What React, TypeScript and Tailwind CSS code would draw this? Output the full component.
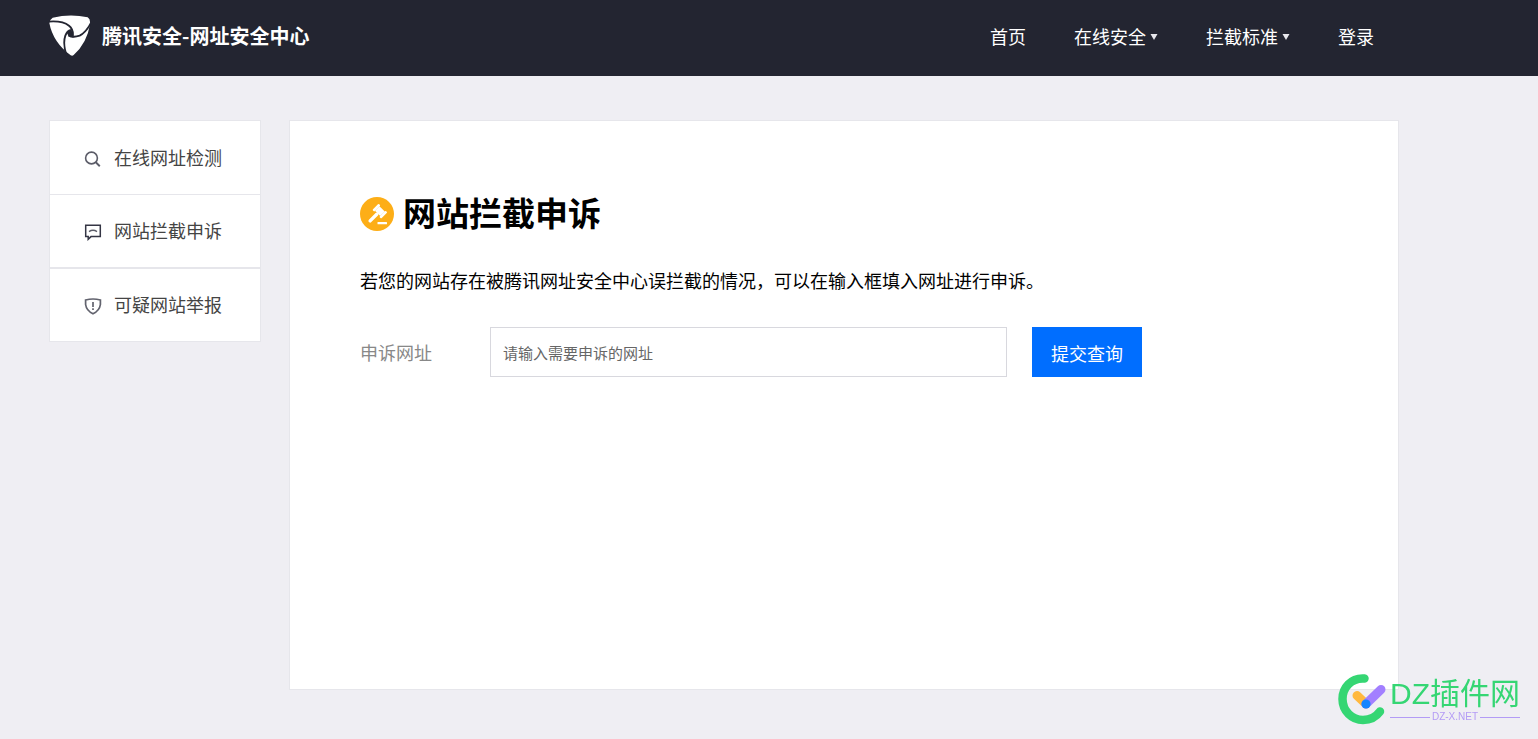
import React from 'react';

const NAV_ITEMS = [
  { label: '首页', menu: false },
  { label: '在线安全', menu: true },
  { label: '拦截标准', menu: true },
  { label: '登录', menu: false },
];

const SearchIcon = () => (
  <svg className="mt-0.5" width="18" height="18" viewBox="0 0 18 18" fill="none" stroke="#5b5c68" strokeWidth="1.6">
    <circle cx="7.5" cy="8" r="5.9" />
    <path d="M11.8 12.3 L15.8 16.2" strokeWidth="1.9" />
  </svg>
);

const MessageIcon = () => (
  <svg className="mt-0.5" width="18" height="18" viewBox="0 0 18 18" fill="none" stroke="#343544" strokeWidth="1.5">
    <path d="M1.7 2.2 H16.3 V13.6 H7 L4.2 16.3 V13.6 H1.7 Z" />
    <path d="M5 8.6 Q9 6 13 8.6" stroke="#5b5c68" />
  </svg>
);

const ShieldIcon = () => (
  <svg className="mt-0.5" width="18" height="18" viewBox="0 0 18 18" fill="none" stroke="#62636e" strokeWidth="1.7">
    <path d="M1.6 3 Q9 1 16.4 3 V7.5 Q15.6 13.6 9 16.8 Q2.4 13.6 1.6 7.5 Z" />
    <path d="M9 5 V10 M9 11.3 V13" />
  </svg>
);

const SIDE_ITEMS = [
  { label: '在线网址检测', icon: SearchIcon },
  { label: '网站拦截申诉', icon: MessageIcon },
  { label: '可疑网站举报', icon: ShieldIcon },
];

const Logo = () => (
  <svg className="shrink-0" width="42" height="42" viewBox="26 30 126 126" fill="none">
    <path d="M27 54 Q28 44 37 38 Q90 26 142 37 Q151 42 149 58 Q140 115 100 150 Q96 154 91 151 Q38 112 27 54 Z" fill="#fff" />
    <g stroke="#232531" strokeWidth="5.5">
      <path d="M22 50 Q66 46 86 62 Q101 74 97 97" />
      <path d="M154 50 Q138 82 118 92 Q98 99 84 91" />
      <path d="M81 158 Q66 118 75 92 Q80 78 92 75" />
    </g>
    <path d="M79 82 L94 74 L98 97 L84 92 Z" fill="#232531" />
  </svg>
);

const GavelIcon = () => (
  <svg className="shrink-0" width="34" height="34" viewBox="0 0 34 34">
    <circle cx="17" cy="17" r="17" fill="#fdae17" />
    <g fill="#fff">
      <g transform="rotate(45 20 14)">
        <rect x="16.2" y="11" width="7.6" height="6.4" />
        <rect x="13.8" y="9.800" width="2.6" height="8.8" rx="0.9" />
        <rect x="23.6" y="9.8" width="2.6" height="8.8" rx="0.9" />
        <rect x="18.3" y="17" width="3.4" height="12.6" rx="1.6" />
      </g>
      <rect x="17.5" y="25" width="9.5" height="2.2" rx="0.5" />
    </g>
  </svg>
);

const Watermark = () => (
  <div className="pointer-events-none fixed bottom-[14px] right-[18px] flex items-center gap-[3px] font-['Liberation_Sans','Noto_Sans_CJK_SC',sans-serif]">
    <svg width="49" height="52" viewBox="0 0 49 52" fill="none" strokeLinecap="round">
      <path d="M26.5 5.5 C13 4.5 4.5 15 4.5 26 C4.5 38 14 47 25 47 C32 47 38 44 42 38.5" stroke="#35d673" strokeWidth="8.5" />
      <path d="M19 22.5 L28 31" stroke="#ffb83f" strokeWidth="9" />
      <path d="M28 31 L43 16.5" stroke="#a27fff" strokeWidth="9" />
      <circle cx="28" cy="31" r="4.6" fill="#1485ff" />
    </svg>
    <div>
      <div className="text-[30px] leading-9 text-[#35d673]">DZ插件网</div>
      <div className="flex items-center gap-[2px] text-[10px] leading-[10px] text-[#b39bf5]">
        <span className="h-px flex-1 bg-[#b39bf5]" />
        DZ-X.NET
        <span className="h-px flex-1 bg-[#b39bf5]" />
      </div>
    </div>
  </div>
);

const App: React.FC = () => {
  return (
    <div className="flex min-h-screen flex-col bg-[#efeef3] font-['Noto_Sans_CJK_SC',sans-serif] text-[18px] text-black">
      <header className="flex h-[76px] items-center justify-between bg-[#232531] pb-1 pl-[49px] pr-[164px] text-white">
        <a href="#" className="flex items-center gap-[11px]">
          <Logo />
          <span className="text-[20px] font-bold leading-7">腾讯安全-网址安全中心</span>
        </a>
        <nav className="flex items-center gap-12">
          {NAV_ITEMS.map((item) => (
            <a key={item.label} href="#" className="flex items-center gap-1 leading-7">
              {item.label}
              {item.menu && (
                <svg className="mt-0.5" width="8" height="6" viewBox="0 0 8 6" fill="#e8e8ec">
                  <path d="M0.5 0 H7.5 L4 6 Z" />
                </svg>
              )}
            </a>
          ))}
        </nav>
      </header>

      <div className="flex flex-1 items-stretch gap-7 pb-[49px] pl-[49px] pr-[139px] pt-11">
        {/* Side menu */}
        <aside className="w-[212px] shrink-0">
          {SIDE_ITEMS.map(({ label, icon: Icon }) => (
            <a
              key={label}
              href="#"
              className="flex h-[74px] items-center gap-3 border border-[#e6e6eb] bg-white pl-[34px] leading-7 text-[#444] first:border-b-0"
            >
              <Icon />
              <span className="pb-0.5">{label}</span>
            </a>
          ))}
        </aside>

        {/* Appeal form */}
        <main className="min-w-0 flex-1 border border-[#e6e6eb] bg-white px-[70px] pt-[73px]">
          <div className="flex items-center gap-[9px]">
            <GavelIcon />
            <h1 className="pb-1 text-[33px] font-bold leading-9">网站拦截申诉</h1>
          </div>
          <p className="mt-8 leading-7">若您的网站存在被腾讯网址安全中心误拦截的情况，可以在输入框填入网址进行申诉。</p>
          <form className="mt-[33px] flex items-center" onSubmit={(e) => e.preventDefault()}>
            <label htmlFor="appeal-url" className="w-[130px] shrink-0 text-[#888]">
              申诉网址
            </label>
            <input
              id="appeal-url"
              type="text"
              placeholder="请输入需要申诉的网址"
              className="h-[50px] min-w-0 max-w-[517px] flex-1 border border-[#d8d8de] bg-white px-3 text-[15px] outline-none placeholder:text-[#666]"
            />
            <button type="submit" className="ml-[25px] h-[50px] w-[110px] shrink-0 bg-[#006eff] pt-0.5 text-white">
              提交查询
            </button>
          </form>
        </main>
      </div>

      <Watermark />
    </div>
  );
};

export default App;
